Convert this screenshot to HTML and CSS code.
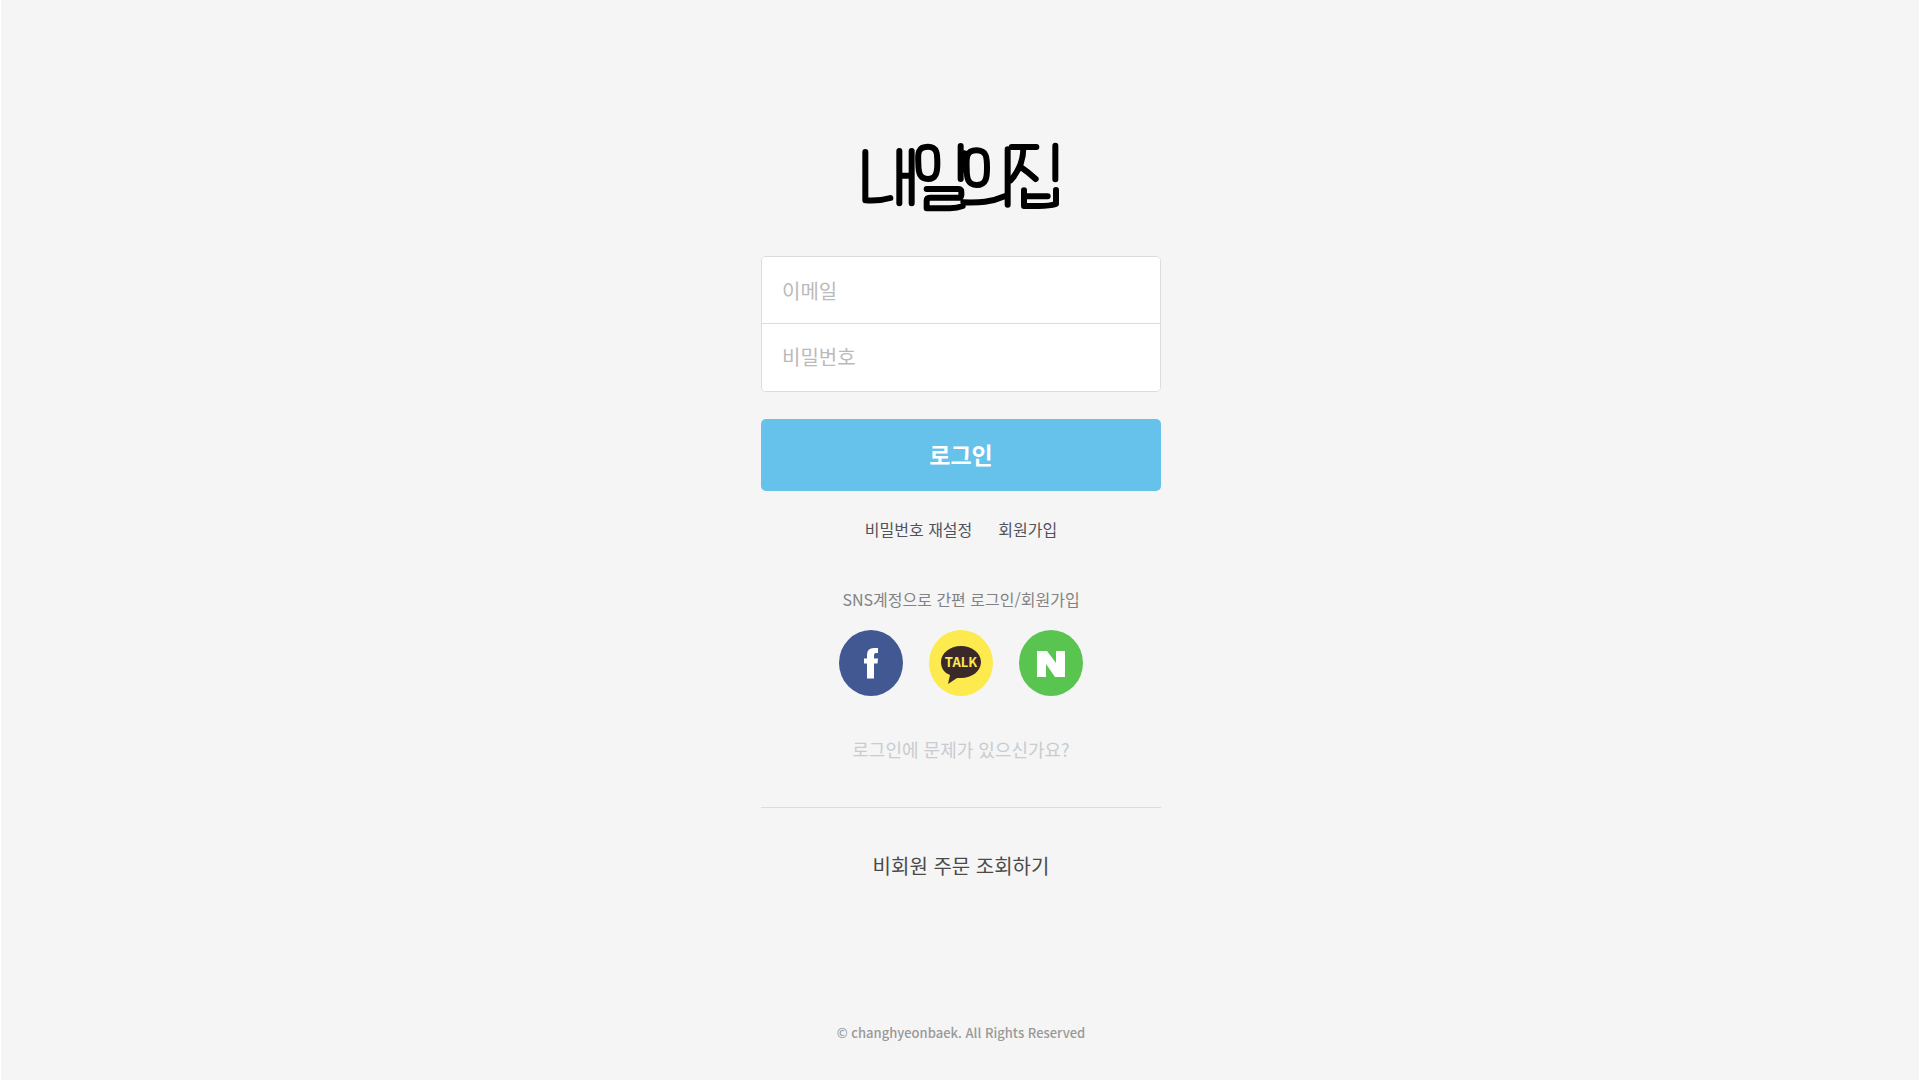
FILE: index.html
```html
<!DOCTYPE html>
<html lang="ko">
<head>
<meta charset="utf-8">
<meta name="viewport" content="width=device-width, initial-scale=1">
<title>내일의집 로그인</title>
<link rel="stylesheet" href="styles.css">
</head>
<body>
<div class="page">
  <main class="login">
    <a class="logo" href="#" aria-label="내일의집">
      <svg class="logo-mark" viewBox="3 0 660 270" aria-hidden="true">
        <path d="M46 66V211Q88 214 121 204M148 63V220M185 63V220M148 137H185"/>
        <path d="M234 50C200 50 204 76 205 100C205 130 210 147 234 147C258 147 262 128 262 100C262 72 262 50 234 50ZM332 48V147"/>
        <path d="M230 177H326Q335 177 334 187V194Q334 203 325 203H240Q230 203 230 213V235H300Q322 234 338 228M340 217C390 218 420 218 466 198"/>
        <path d="M379 61C347 61 349 86 350 113C350 145 353 165 380 165C409 165 411 142 411 113C411 82 410 61 379 61ZM343 70V120M473 58V224"/>
        <path d="M485 51H559M520 54Q520 108 482 151M511 110Q532 124 557 147M616 47V148M522 181V228H565Q600 228 618 222V180M522 199H593"/>
      </svg>
    </a>

    <form class="form" onsubmit="return false">
      <div class="fields">
        <input class="field" type="email" placeholder="이메일" aria-label="이메일">
        <input class="field" type="password" placeholder="비밀번호" aria-label="비밀번호">
      </div>
      <button class="submit" type="submit">로그인</button>
    </form>

    <nav class="links">
      <a href="#">비밀번호 재설정</a>
      <a href="#">회원가입</a>
    </nav>

    <section class="sns">
      <p class="sns-title">SNS계정으로 간편 로그인/회원가입</p>
      <div class="sns-list">
        <a class="sns-item facebook" href="#" aria-label="페이스북">
          <svg class="sns-icon" viewBox="0 0 64 66" aria-hidden="true">
            <path fill="#fff" d="M28 48.500V33.500H25V28.500H28V25Q28 18 35 18H39V23H37Q35 23 35 25V28.500H39L38.500 33.500H35V48.500Z"/>
          </svg>
        </a>
        <a class="sns-item kakao" href="#" aria-label="카카오톡">
          <svg class="sns-icon" viewBox="0 0 64 66" aria-hidden="true">
            <path fill="#3b2929" d="M32 16C21 16 12 23 12 32C12 38 15 43 21 45L19 54L28 48Q30 48 32 48C43 48 52 41 52 32S43 16 32 16Z"/>
            <text class="talk" x="32" y="37" text-anchor="middle">TALK</text>
          </svg>
        </a>
        <a class="sns-item naver" href="#" aria-label="네이버">
          <svg class="sns-icon" viewBox="0 0 64 66" aria-hidden="true">
            <path fill="#fff" d="M18 21H28L37 33V21H46V47H36L27 34V47H18Z"/>
          </svg>
        </a>
      </div>
    </section>

    <a class="help" href="#">로그인에 문제가 있으신가요?</a>
    <div class="guest">
      <a href="#">비회원 주문 조회하기</a>
    </div>
  </main>
  <footer class="footer">© changhyeonbaek. All Rights Reserved</footer>
</div>
</body>
</html>
```
FILE: styles.css
```css
* {
  box-sizing: border-box;
}

body {
  margin: 0;
  background: #fff;
  font-family: "Noto Sans CJK KR", sans-serif;
  font-size: 16px;
  line-height: 24px;
}

a {
  color: inherit;
  text-decoration: none;
}

.page {
  display: flex;
  flex-direction: column;
  align-items: center;
  justify-content: space-between;
  min-height: 100vh;
  margin: 0 1px;
  padding: 130px 16px 35px 18px;
  background: #f5f5f5;
}

.login {
  display: flex;
  flex-direction: column;
  align-items: center;
  width: 100%;
  max-width: 400px;
}

.logo-mark {
  display: block;
  width: 220px;
  height: 90px;
  fill: none;
  stroke: #000;
  stroke-width: 18;
  stroke-linecap: round;
  stroke-linejoin: round;
}

.form {
  width: 100%;
  margin-top: 36px;
}

.fields {
  border: 1px solid #dcdcdc;
  border-radius: 5px;
  background: #fff;
  overflow: hidden;
}

.field {
  display: block;
  width: 100%;
  height: 66px;
  padding: 0 20px;
  border: 0;
  background: #fff;
  color: #424242;
  font: inherit;
  font-size: 20px;
}

.field + .field {
  height: 68px;
  padding-bottom: 2px;
  border-top: 1px solid #dcdcdc;
}

.field::placeholder {
  color: #bababa;
  opacity: 1;
}

.submit {
  display: block;
  width: 100%;
  height: 72px;
  margin-top: 27px;
  padding: 0 0 2px;
  border: 0;
  border-radius: 5px;
  background: #66c1eb;
  color: #fff;
  font: inherit;
  font-size: 23px;
  font-weight: 700;
  cursor: pointer;
}

.links {
  display: flex;
  gap: 26px;
  margin-top: 26px;
  color: #52525c;
}

.sns {
  margin-top: 46px;
  text-align: center;
}

.sns-title {
  margin: 0;
  color: #828282;
}

.sns-list {
  display: flex;
  justify-content: center;
  gap: 26px;
  margin-top: 19px;
}

.sns-item {
  width: 64px;
  height: 66px;
  border-radius: 50%;
}

.sns-icon {
  display: block;
  width: 100%;
  height: 100%;
}

.facebook {
  background: #425893;
}

.kakao {
  background: #fcea4f;
}

.naver {
  background: #5ac451;
}

.talk {
  fill: #fcea4f;
  font-family: "Noto Sans CJK KR", sans-serif;
  font-size: 13px;
  font-weight: 700;
}

.help {
  margin-top: 41px;
  color: #c8ccd0;
  font-size: 18px;
}

.guest {
  width: 100%;
  margin-top: 46px;
  padding-top: 46px;
  border-top: 1px solid #dcdcdc;
  color: #4a4a4a;
  font-size: 20px;
  text-align: center;
}

.footer {
  color: #999;
  font-size: 13px;
  font-weight: 500;
}
```
